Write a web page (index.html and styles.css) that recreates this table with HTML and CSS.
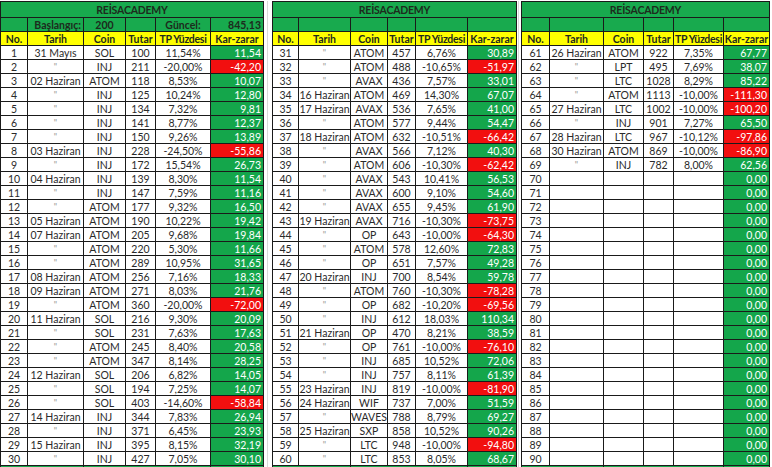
FILE: index.html
```html
<!DOCTYPE html>
<html lang="tr">
<head>
<meta charset="utf-8">
<title>REİSACADEMY</title>
<link rel="stylesheet" href="styles.css">
</head>
<body>
<div class="sheet">
<table class="t t1">
<colgroup><col class="c-no1"><col class="c-ta1"><col class="c-co1"><col class="c-tu1"><col class="c-tp1"><col class="c-kz1"></colgroup>
<tr class="title"><td colspan="6">REİSACADEMY</td></tr>
<tr class="info"><td></td><td class="r">Başlangıç:</td><td>200</td><td></td><td>Güncel:</td><td class="r">845,13</td></tr>
<tr class="head"><td>No.</td><td>Tarih</td><td>Coin</td><td>Tutar</td><td>TP Yüzdesi</td><td>Kar-zarar</td></tr>
<tr><td>1</td><td>31 Mayıs</td><td>SOL</td><td>100</td><td>11,54%</td><td class="g">11,54</td></tr>
<tr><td>2</td><td class="d">"</td><td>INJ</td><td>211</td><td>-20,00%</td><td class="x">-42,20</td></tr>
<tr><td>3</td><td>02 Haziran</td><td>ATOM</td><td>118</td><td>8,53%</td><td class="g">10,07</td></tr>
<tr><td>4</td><td class="d">"</td><td>INJ</td><td>125</td><td>10,24%</td><td class="g">12,80</td></tr>
<tr><td>5</td><td class="d">"</td><td>INJ</td><td>134</td><td>7,32%</td><td class="g">9,81</td></tr>
<tr><td>6</td><td class="d">"</td><td>INJ</td><td>141</td><td>8,77%</td><td class="g">12,37</td></tr>
<tr><td>7</td><td class="d">"</td><td>INJ</td><td>150</td><td>9,26%</td><td class="g">13,89</td></tr>
<tr><td>8</td><td>03 Haziran</td><td>INJ</td><td>228</td><td>-24,50%</td><td class="x">-55,86</td></tr>
<tr><td>9</td><td class="d">"</td><td>INJ</td><td>172</td><td>15,54%</td><td class="g">26,73</td></tr>
<tr><td>10</td><td>04 Haziran</td><td>INJ</td><td>139</td><td>8,30%</td><td class="g">11,54</td></tr>
<tr><td>11</td><td class="d">"</td><td>INJ</td><td>147</td><td>7,59%</td><td class="g">11,16</td></tr>
<tr><td>12</td><td class="d">"</td><td>ATOM</td><td>177</td><td>9,32%</td><td class="g">16,50</td></tr>
<tr><td>13</td><td>05 Haziran</td><td>ATOM</td><td>190</td><td>10,22%</td><td class="g">19,42</td></tr>
<tr><td>14</td><td>07 Haziran</td><td>ATOM</td><td>205</td><td>9,68%</td><td class="g">19,84</td></tr>
<tr><td>15</td><td class="d">"</td><td>ATOM</td><td>220</td><td>5,30%</td><td class="g">11,66</td></tr>
<tr><td>16</td><td class="d">"</td><td>ATOM</td><td>289</td><td>10,95%</td><td class="g">31,65</td></tr>
<tr><td>17</td><td>08 Haziran</td><td>ATOM</td><td>256</td><td>7,16%</td><td class="g">18,33</td></tr>
<tr><td>18</td><td>09 Haziran</td><td>ATOM</td><td>271</td><td>8,03%</td><td class="g">21,76</td></tr>
<tr><td>19</td><td class="d">"</td><td>ATOM</td><td>360</td><td>-20,00%</td><td class="x">-72,00</td></tr>
<tr><td>20</td><td>11 Haziran</td><td>SOL</td><td>216</td><td>9,30%</td><td class="g">20,09</td></tr>
<tr><td>21</td><td class="d">"</td><td>SOL</td><td>231</td><td>7,63%</td><td class="g">17,63</td></tr>
<tr><td>22</td><td class="d">"</td><td>ATOM</td><td>245</td><td>8,40%</td><td class="g">20,58</td></tr>
<tr><td>23</td><td class="d">"</td><td>ATOM</td><td>347</td><td>8,14%</td><td class="g">28,25</td></tr>
<tr><td>24</td><td>12 Haziran</td><td>SOL</td><td>206</td><td>6,82%</td><td class="g">14,05</td></tr>
<tr><td>25</td><td class="d">"</td><td>SOL</td><td>194</td><td>7,25%</td><td class="g">14,07</td></tr>
<tr><td>26</td><td class="d">"</td><td>SOL</td><td>403</td><td>-14,60%</td><td class="x">-58,84</td></tr>
<tr><td>27</td><td>14 Haziran</td><td>INJ</td><td>344</td><td>7,83%</td><td class="g">26,94</td></tr>
<tr><td>28</td><td class="d">"</td><td>INJ</td><td>371</td><td>6,45%</td><td class="g">23,93</td></tr>
<tr><td>29</td><td>15 Haziran</td><td>INJ</td><td>395</td><td>8,15%</td><td class="g">32,19</td></tr>
<tr><td>30</td><td class="d">"</td><td>INJ</td><td>427</td><td>7,05%</td><td class="g">30,10</td></tr>
<tr class="foot"><td colspan="2"></td><td colspan="3"></td><td></td></tr>
</table>
<div class="gap gap1"></div>
<table class="t t2">
<colgroup><col class="c-no2"><col class="c-ta2"><col class="c-co2"><col class="c-tu2"><col class="c-tp2"><col class="c-kz2"></colgroup>
<tr class="title"><td colspan="6">REİSACADEMY</td></tr>
<tr class="info"><td></td><td></td><td></td><td></td><td></td><td></td></tr>
<tr class="head"><td>No.</td><td>Tarih</td><td>Coin</td><td>Tutar</td><td>TP Yüzdesi</td><td>Kar-zarar</td></tr>
<tr><td>31</td><td class="d">"</td><td>ATOM</td><td>457</td><td>6,76%</td><td class="g">30,89</td></tr>
<tr><td>32</td><td class="d">"</td><td>ATOM</td><td>488</td><td>-10,65%</td><td class="x">-51,97</td></tr>
<tr><td>33</td><td class="d">"</td><td>AVAX</td><td>436</td><td>7,57%</td><td class="g">33,01</td></tr>
<tr><td>34</td><td>16 Haziran</td><td>ATOM</td><td>469</td><td>14,30%</td><td class="g">67,07</td></tr>
<tr><td>35</td><td>17 Haziran</td><td>AVAX</td><td>536</td><td>7,65%</td><td class="g">41,00</td></tr>
<tr><td>36</td><td class="d">"</td><td>ATOM</td><td>577</td><td>9,44%</td><td class="g">54,47</td></tr>
<tr><td>37</td><td>18 Haziran</td><td>ATOM</td><td>632</td><td>-10,51%</td><td class="x">-66,42</td></tr>
<tr><td>38</td><td class="d">"</td><td>AVAX</td><td>566</td><td>7,12%</td><td class="g">40,30</td></tr>
<tr><td>39</td><td class="d">"</td><td>ATOM</td><td>606</td><td>-10,30%</td><td class="x">-62,42</td></tr>
<tr><td>40</td><td class="d">"</td><td>AVAX</td><td>543</td><td>10,41%</td><td class="g">56,53</td></tr>
<tr><td>41</td><td class="d">"</td><td>AVAX</td><td>600</td><td>9,10%</td><td class="g">54,60</td></tr>
<tr><td>42</td><td class="d">"</td><td>AVAX</td><td>655</td><td>9,45%</td><td class="g">61,90</td></tr>
<tr><td>43</td><td>19 Haziran</td><td>AVAX</td><td>716</td><td>-10,30%</td><td class="x">-73,75</td></tr>
<tr><td>44</td><td class="d">"</td><td>OP</td><td>643</td><td>-10,00%</td><td class="x">-64,30</td></tr>
<tr><td>45</td><td class="d">"</td><td>ATOM</td><td>578</td><td>12,60%</td><td class="g">72,83</td></tr>
<tr><td>46</td><td class="d">"</td><td>OP</td><td>651</td><td>7,57%</td><td class="g">49,28</td></tr>
<tr><td>47</td><td>20 Haziran</td><td>INJ</td><td>700</td><td>8,54%</td><td class="g">59,78</td></tr>
<tr><td>48</td><td class="d">"</td><td>ATOM</td><td>760</td><td>-10,30%</td><td class="x">-78,28</td></tr>
<tr><td>49</td><td class="d">"</td><td>OP</td><td>682</td><td>-10,20%</td><td class="x">-69,56</td></tr>
<tr><td>50</td><td class="d">"</td><td>INJ</td><td>612</td><td>18,03%</td><td class="g">110,34</td></tr>
<tr><td>51</td><td>21 Haziran</td><td>OP</td><td>470</td><td>8,21%</td><td class="g">38,59</td></tr>
<tr><td>52</td><td class="d">"</td><td>OP</td><td>761</td><td>-10,00%</td><td class="x">-76,10</td></tr>
<tr><td>53</td><td class="d">"</td><td>INJ</td><td>685</td><td>10,52%</td><td class="g">72,06</td></tr>
<tr><td>54</td><td class="d">"</td><td>INJ</td><td>757</td><td>8,11%</td><td class="g">61,39</td></tr>
<tr><td>55</td><td>23 Haziran</td><td>INJ</td><td>819</td><td>-10,00%</td><td class="x">-81,90</td></tr>
<tr><td>56</td><td>24 Haziran</td><td>WIF</td><td>737</td><td>7,00%</td><td class="g">51,59</td></tr>
<tr><td>57</td><td class="d">"</td><td>WAVES</td><td>788</td><td>8,79%</td><td class="g">69,27</td></tr>
<tr><td>58</td><td>25 Haziran</td><td>SXP</td><td>858</td><td>10,52%</td><td class="g">90,26</td></tr>
<tr><td>59</td><td class="d">"</td><td>LTC</td><td>948</td><td>-10,00%</td><td class="x">-94,80</td></tr>
<tr><td>60</td><td class="d">"</td><td>LTC</td><td>853</td><td>8,05%</td><td class="g">68,67</td></tr>
<tr class="foot"><td colspan="2"></td><td colspan="3"></td><td></td></tr>
</table>
<div class="gap gap2"></div>
<table class="t t3">
<colgroup><col class="c-no3"><col class="c-ta3"><col class="c-co3"><col class="c-tu3"><col class="c-tp3"><col class="c-kz3"></colgroup>
<tr class="title"><td colspan="6">REİSACADEMY</td></tr>
<tr class="info"><td></td><td></td><td></td><td></td><td></td><td></td></tr>
<tr class="head"><td>No.</td><td>Tarih</td><td>Coin</td><td>Tutar</td><td>TP Yüzdesi</td><td>Kar-zarar</td></tr>
<tr><td>61</td><td>26 Haziran</td><td>ATOM</td><td>922</td><td>7,35%</td><td class="g">67,77</td></tr>
<tr><td>62</td><td class="d">"</td><td>LPT</td><td>495</td><td>7,69%</td><td class="g">38,07</td></tr>
<tr><td>63</td><td class="d">"</td><td>LTC</td><td>1028</td><td>8,29%</td><td class="g">85,22</td></tr>
<tr><td>64</td><td class="d">"</td><td>ATOM</td><td>1113</td><td>-10,00%</td><td class="x">-111,30</td></tr>
<tr><td>65</td><td>27 Haziran</td><td>LTC</td><td>1002</td><td>-10,00%</td><td class="x">-100,20</td></tr>
<tr><td>66</td><td class="d">"</td><td>INJ</td><td>901</td><td>7,27%</td><td class="g">65,50</td></tr>
<tr><td>67</td><td>28 Haziran</td><td>LTC</td><td>967</td><td>-10,12%</td><td class="x">-97,86</td></tr>
<tr><td>68</td><td>30 Haziran</td><td>ATOM</td><td>869</td><td>-10,00%</td><td class="x">-86,90</td></tr>
<tr><td>69</td><td class="d">"</td><td>INJ</td><td>782</td><td>8,00%</td><td class="g">62,56</td></tr>
<tr><td>70</td><td></td><td></td><td></td><td></td><td class="g">0,00</td></tr>
<tr><td>71</td><td></td><td></td><td></td><td></td><td class="g">0,00</td></tr>
<tr><td>72</td><td></td><td></td><td></td><td></td><td class="g">0,00</td></tr>
<tr><td>73</td><td></td><td></td><td></td><td></td><td class="g">0,00</td></tr>
<tr><td>74</td><td></td><td></td><td></td><td></td><td class="g">0,00</td></tr>
<tr><td>75</td><td></td><td></td><td></td><td></td><td class="g">0,00</td></tr>
<tr><td>76</td><td></td><td></td><td></td><td></td><td class="g">0,00</td></tr>
<tr><td>77</td><td></td><td></td><td></td><td></td><td class="g">0,00</td></tr>
<tr><td>78</td><td></td><td></td><td></td><td></td><td class="g">0,00</td></tr>
<tr><td>79</td><td></td><td></td><td></td><td></td><td class="g">0,00</td></tr>
<tr><td>80</td><td></td><td></td><td></td><td></td><td class="g">0,00</td></tr>
<tr><td>81</td><td></td><td></td><td></td><td></td><td class="g">0,00</td></tr>
<tr><td>82</td><td></td><td></td><td></td><td></td><td class="g">0,00</td></tr>
<tr><td>83</td><td></td><td></td><td></td><td></td><td class="g">0,00</td></tr>
<tr><td>84</td><td></td><td></td><td></td><td></td><td class="g">0,00</td></tr>
<tr><td>85</td><td></td><td></td><td></td><td></td><td class="g">0,00</td></tr>
<tr><td>86</td><td></td><td></td><td></td><td></td><td class="g">0,00</td></tr>
<tr><td>87</td><td></td><td></td><td></td><td></td><td class="g">0,00</td></tr>
<tr><td>88</td><td></td><td></td><td></td><td></td><td class="g">0,00</td></tr>
<tr><td>89</td><td></td><td></td><td></td><td></td><td class="g">0,00</td></tr>
<tr><td>90</td><td></td><td></td><td></td><td></td><td class="g">0,00</td></tr>
<tr class="foot"><td colspan="2"></td><td colspan="3"></td><td></td></tr>
</table>
</div>
</body>
</html>
```
FILE: styles.css
```css
html, body {
  margin: 0;
  padding: 0;
  background: #ffffff;
}

body {
  font-family: Lato, "Liberation Sans", sans-serif;
  font-size: 10.5px;
  color: #2a2a2a;
}

.sheet {
  display: flex;
  align-items: flex-start;
  width: 772px;
  padding-top: 1px;
}

.gap {
  flex: none;
  align-self: stretch;
  height: 467px;
}

.gap1 {
  width: 8px;
  background: linear-gradient(to right, transparent 3px, #d9d9d9 3px, #d9d9d9 4px, transparent 4px);
}

.gap2 {
  width: 4px;
  background: linear-gradient(to right, transparent 1px, #d9d9d9 1px, #d9d9d9 2px, transparent 2px);
}

.t {
  border-collapse: collapse;
  table-layout: fixed;
  flex: none;
}

.t1 { width: 264px; }
.t2 { width: 245px; }
.t3 { width: 249px; }

.t tr {
  height: 14px;
}

.t td {
  border: 1px solid #1a1a1a;
  padding: 0;
  line-height: 12px;
  text-align: center;
  white-space: nowrap;
  overflow: hidden;
  background: #ffffff;
}

.t tr.title {
  height: 16px;
}

.t tr.title td {
  background: #18aa4e;
  font-weight: 700;
  color: #1d2b1d;
  letter-spacing: -0.2px;
}

.t tr.info td {
  background: #18aa4e;
  color: #1d2b1d;
  font-weight: 700;
}

.t tr.head td {
  background: #ffff00;
  color: #1d2b1d;
  font-weight: 700;
}

.t tr.head td:nth-child(5) {
  letter-spacing: -0.3px;
}

.t tr.foot td {
  background: #18aa4e;
}

.t td.r {
  text-align: right;
  padding-right: 2px;
}

.t td.g {
  background: #14a64b;
  color: #ffffff;
  text-align: right;
  padding-right: 2px;
}

.t td.x {
  background: #f20f0f;
  color: #ffffff;
  text-align: right;
  padding-right: 2px;
}

.t td.d {
  color: #9a9a9a;
  font-size: 9px;
}

/* table 1 columns */
.c-no1 { width: 27px; }
.c-ta1 { width: 56px; }
.c-co1 { width: 42px; }
.c-tu1 { width: 30px; }
.c-tp1 { width: 55px; }
.c-kz1 { width: 53px; }

/* table 2 columns */
.c-no2 { width: 26px; }
.c-ta2 { width: 52px; }
.c-co2 { width: 37px; }
.c-tu2 { width: 28px; }
.c-tp2 { width: 52px; }
.c-kz2 { width: 49px; }

/* table 3 columns */
.c-no3 { width: 28px; }
.c-ta3 { width: 54px; }
.c-co3 { width: 40px; }
.c-tu3 { width: 30px; }
.c-tp3 { width: 50px; }
.c-kz3 { width: 46px; }
```
